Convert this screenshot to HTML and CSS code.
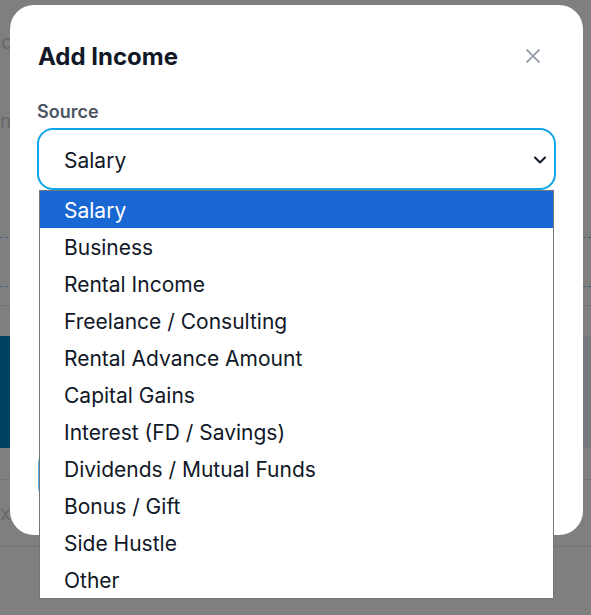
FILE: index.html
```html
<!DOCTYPE html>
<html lang="en">
<head>
<meta charset="utf-8">
<title>Add Income</title>
<link rel="stylesheet" href="styles.css">
</head>
<body>
  <div class="page">
    <div class="bg-text bg-line1">ca</div>
    <div class="bg-text bg-line2">m</div>
    <div class="dash dash1"></div>
    <div class="dash dash2"></div>
    <div class="rule rule1"></div>
    <div class="hero"></div>
    <div class="rule rule2"></div>
    <div class="bg-text bg-line3">xp</div>
    <div class="rule rule3"></div>
  </div>

  <div class="overlay">
    <div class="modal" role="dialog" aria-labelledby="modal-title">
      <div class="modal-header">
        <h2 id="modal-title" class="modal-title">Add Income</h2>
        <button class="close-btn" aria-label="Close">
          <svg width="14" height="14" viewBox="0 0 14 14" fill="none" stroke="currentColor" stroke-width="1.8" stroke-linecap="round">
            <path d="M1 1L13 13M13 1L1 13"/>
          </svg>
        </button>
      </div>

      <div class="field">
        <label class="field-label">Source</label>
        <div class="select-wrap">
          <div class="select" role="combobox" aria-expanded="true">
            <span class="select-value">Salary</span>
            <svg class="chevron" width="12" height="8" viewBox="0 0 12 8" fill="none" stroke="currentColor" stroke-width="2" stroke-linecap="round" stroke-linejoin="round">
              <path d="M1 1.5L6 6.5L11 1.5"/>
            </svg>
          </div>
          <ul class="listbox" role="listbox">
            <li class="option selected">Salary</li>
            <li class="option">Business</li>
            <li class="option">Rental Income</li>
            <li class="option">Freelance / Consulting</li>
            <li class="option">Rental Advance Amount</li>
            <li class="option">Capital Gains</li>
            <li class="option">Interest (FD / Savings)</li>
            <li class="option">Dividends / Mutual Funds</li>
            <li class="option">Bonus / Gift</li>
            <li class="option">Side Hustle</li>
            <li class="option">Other</li>
          </ul>
        </div>
      </div>

      <div class="actions">
        <button class="btn-primary" aria-label="Add Income"></button>
      </div>
    </div>
  </div>
</body>
</html>
```

FILE: styles.css
```css
* {
  box-sizing: border-box;
}

html, body {
  margin: 0;
  padding: 0;
}

body {
  background: #ffffff;
  font-family: Inter, "Noto Sans", "Liberation Sans", sans-serif;
  color: #111827;
  overflow: hidden;
}

/* ---------- background page (under the overlay) ---------- */
.page {
  padding-top: 1px;
}

.bg-text {
  font-size: 20px;
  line-height: 24px;
  color: #cfcfcf;
  white-space: nowrap;
}

.bg-line1 {
  margin-top: 29px;
  padding-left: 1px;
}

.bg-line2 {
  margin-top: 55px;
}

.dash {
  height: 0;
  border-top: 1px dashed #93c5fd;
}

.dash1 {
  margin-top: 104px;
}

.dash2 {
  margin-top: 48px;
}

.rule {
  height: 0;
  border-top: 1px solid #e5e7eb;
}

.rule1 {
  margin-top: 18px;
}

.hero {
  margin-top: 30px;
  height: 112px;
  background: linear-gradient(90deg, #0284c7 0%, #0369a1 40%, #eef2ff 100%);
}

.rule2 {
  margin-top: 31px;
}

.bg-line3 {
  margin-top: 21px;
}

.rule3 {
  margin-top: 21px;
}

/* ---------- overlay + modal ---------- */
.overlay {
  position: fixed;
  inset: 0;
  background: rgba(0, 0, 0, 0.5);
  padding: 5px 0 0 10px;
}

.modal {
  width: 573px;
  background: #ffffff;
  border-radius: 24px;
  padding: 36px 27px 37px;
}

.modal-header {
  display: flex;
  align-items: center;
  justify-content: space-between;
  margin-bottom: 27px;
}

.modal-title {
  margin: 0;
  padding-left: 1px;
  font-size: 24px;
  line-height: 32px;
  font-weight: 700;
  color: #111827;
}

.close-btn {
  display: flex;
  padding: 0;
  margin: 0 16px 3px 0;
  border: 0;
  background: none;
  color: #9ca3af;
  cursor: pointer;
}

.field-label {
  display: block;
  font-size: 18px;
  line-height: 24px;
  font-weight: 600;
  color: #4b5563;
  margin-bottom: 4px;
}

.select-wrap {
  position: relative;
}

.select {
  height: 62px;
  border: 2px solid #0ea5e9;
  border-radius: 16px;
  padding: 0 8px 0 25px;
  display: flex;
  align-items: center;
  justify-content: space-between;
  font-size: 21px;
  color: #111827;
}

.select-value {
  margin-top: 2px;
}

.chevron {
  color: #111827;
  margin-top: 1px;
}

.listbox {
  position: absolute;
  top: 100%;
  left: 2px;
  width: 515px;
  margin: 0;
  padding: 0;
  list-style: none;
  background: #ffffff;
  border: 1px solid #767676;
  z-index: 10;
}

.option {
  height: 37px;
  line-height: 39px;
  padding-left: 24px;
  font-size: 21px;
  color: #111827;
  white-space: nowrap;
}

.option.selected {
  background: #1967d2;
  color: #ffffff;
}

.actions {
  margin-top: 262px;
  display: flex;
}

.btn-primary {
  margin-left: 1px;
  width: 200px;
  height: 46px;
  border: 0;
  border-radius: 10px;
  background: #5ab8ee;
}
```
